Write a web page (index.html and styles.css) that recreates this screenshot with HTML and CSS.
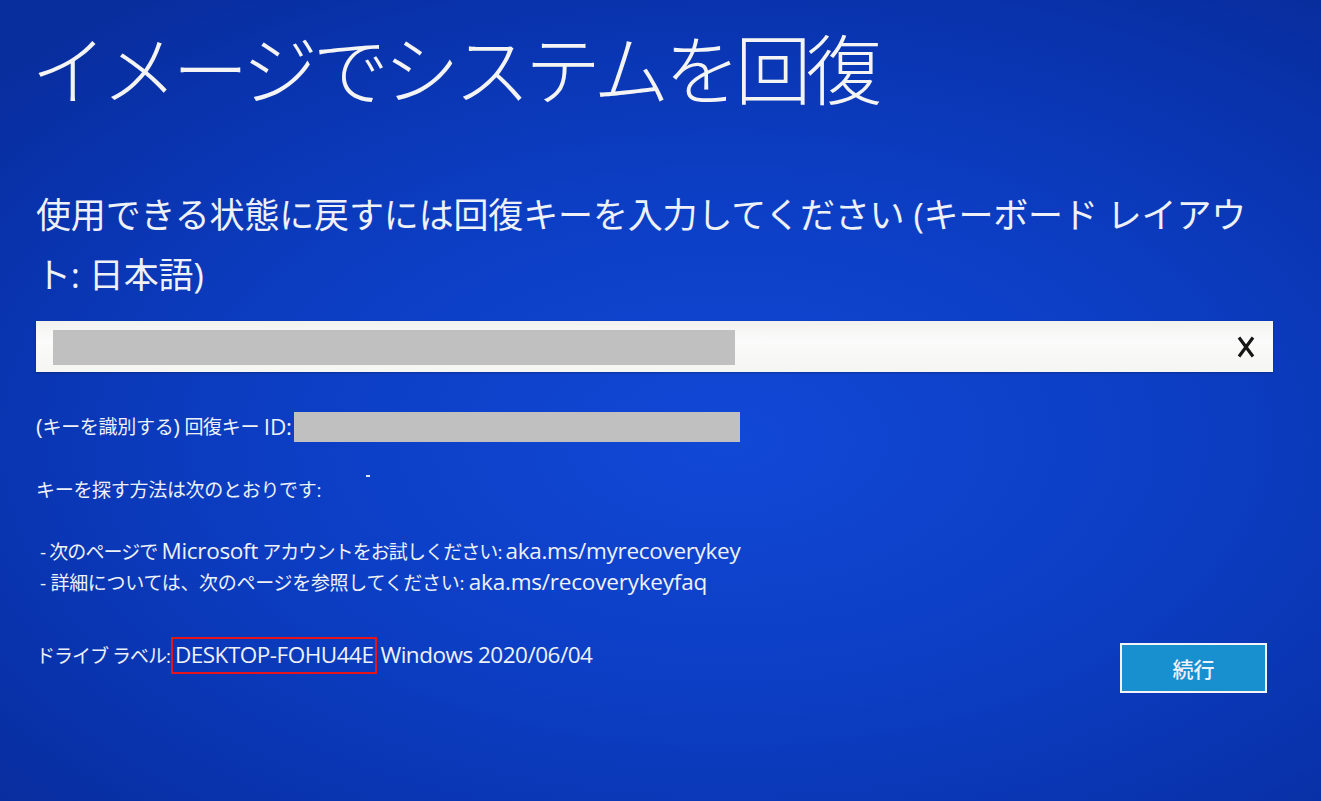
FILE: index.html
```html
<!DOCTYPE html>
<html lang="ja">
<head>
<meta charset="utf-8">
<title>イメージでシステムを回復</title>
<link rel="stylesheet" href="styles.css">
</head>
<body>
<div class="screen">
  <h1 class="title">イメージでシステムを回復</h1>
  <p class="prompt">使用できる状態に戻すには回復キーを入力してください (キーボード レイアウト: 日本語)</p>
  <div class="keybox">
    <div class="redact redact-key"></div>
    <svg class="clear" width="18" height="22" viewBox="0 0 18 22" aria-label="クリア">
      <path d="M2 1.5 L16 20.5 M16 1.5 L2 20.5" stroke="#161616" stroke-width="3.2" stroke-linecap="butt" fill="none"/>
    </svg>
  </div>
  <p class="line idline"><span class="lat">(</span>キーを識別する<span class="lat">)</span> 回復キー <span class="lat">ID:</span><span class="redact redact-id"></span></p>
  <p class="line findline">キーを探す方法は次のとおりです:<span class="speck"></span></p>
  <p class="line bullet first">- 次のページで <span class="lat">Microsoft</span> アカウントをお試しください: <span class="lat">aka.ms/myrecoverykey</span></p>
  <p class="line bullet">- 詳細については、次のページを参照してください: <span class="lat">aka.ms/recoverykeyfaq</span></p>
  <div class="footer">
    <p class="line drive">ドライブ ラベル:<span class="mark lat">DESKTOP-FOHU44E</span><span class="lat">Windows 2020/06/04</span></p>
    <button class="continue">続行</button>
  </div>
</div>
</body>
</html>
```
FILE: styles.css
```css
html, body {
  margin: 0;
  padding: 0;
  width: 1321px;
  height: 801px;
  overflow: hidden;
}
body {
  background: radial-gradient(ellipse 75% 70% at 55% 55%, #1148d6 0%, #0c3ec4 45%, #0933ad 80%, #082d9c 100%);
  color: #eef1f8;
  font-family: "Open Sans", "Noto Sans CJK JP", sans-serif;
}
.screen {
  display: flex;
  flex-direction: column;
  padding: 25px 48px 0 36px;
}
.title {
  margin: 0 0 0 -5px;
  font-size: 76px;
  line-height: 90px;
  font-weight: 300;
  letter-spacing: -5.2px;
  color: #f4f4f4;
}
.prompt {
  margin: 70px 0 0 0;
  font-size: 35px;
  line-height: 60px;
  font-weight: 400;
  letter-spacing: -0.15px;
  padding-right: 10px;
}
.keybox {
  margin-top: 16px;
  height: 51px;
  background: linear-gradient(#f2f2ef, #fbfbfb 40%, #f5f5f2);
  display: flex;
  align-items: center;
  justify-content: space-between;
  box-shadow: 0 1px 2px rgba(0,0,0,0.25);
}
.redact {
  background: #c0c0c0;
  display: inline-block;
}
.redact-key {
  align-self: flex-start;
  margin: 9px 0 0 17px;
  width: 682px;
  height: 35px;
}
.clear {
  margin-right: 18px;
}
.line {
  margin: 0;
  font-size: 19px;
  line-height: 30px;
  letter-spacing: -0.3px;
}
.lat {
  font-size: 22.5px;
  line-height: 1;
  letter-spacing: -0.2px;
}
.idline {
  margin-top: 40px;
  display: flex;
  align-items: center;
  white-space: pre;
}
.redact-id {
  width: 446px;
  height: 30px;
  margin-left: 2px;
}
.findline {
  margin-top: 33px;
  position: relative;
}
.speck {
  position: absolute;
  left: 330px;
  top: 0;
  width: 4px;
  height: 2px;
  background: #dfe6f5;
}
.bullet {
  line-height: 31px;
  padding-left: 4px;
}
.bullet.first {
  margin-top: 32px;
  letter-spacing: -0.9px;
}
.bullet.first .lat {
  letter-spacing: -0.3px;
}
.footer {
  margin-top: 38px;
  display: flex;
  justify-content: space-between;
  align-items: flex-start;
}
.drive {
  letter-spacing: -1px;
}
.drive .lat {
  letter-spacing: -0.5px;
}
.mark {
  display: inline-block;
  border: 2px solid #e8141c;
  padding: 5px 2px 5px 2px;
  margin: 0 3px 0 1px;
}
.continue {
  margin: 6px 6px 0 0;
  width: 147px;
  height: 50px;
  background: #1890cf;
  border: 2px solid #f2f4f8;
  color: #eef3fb;
  font-family: "Noto Sans CJK JP", sans-serif;
  font-size: 21px;
  font-weight: 500;
  padding: 0;
}
```
